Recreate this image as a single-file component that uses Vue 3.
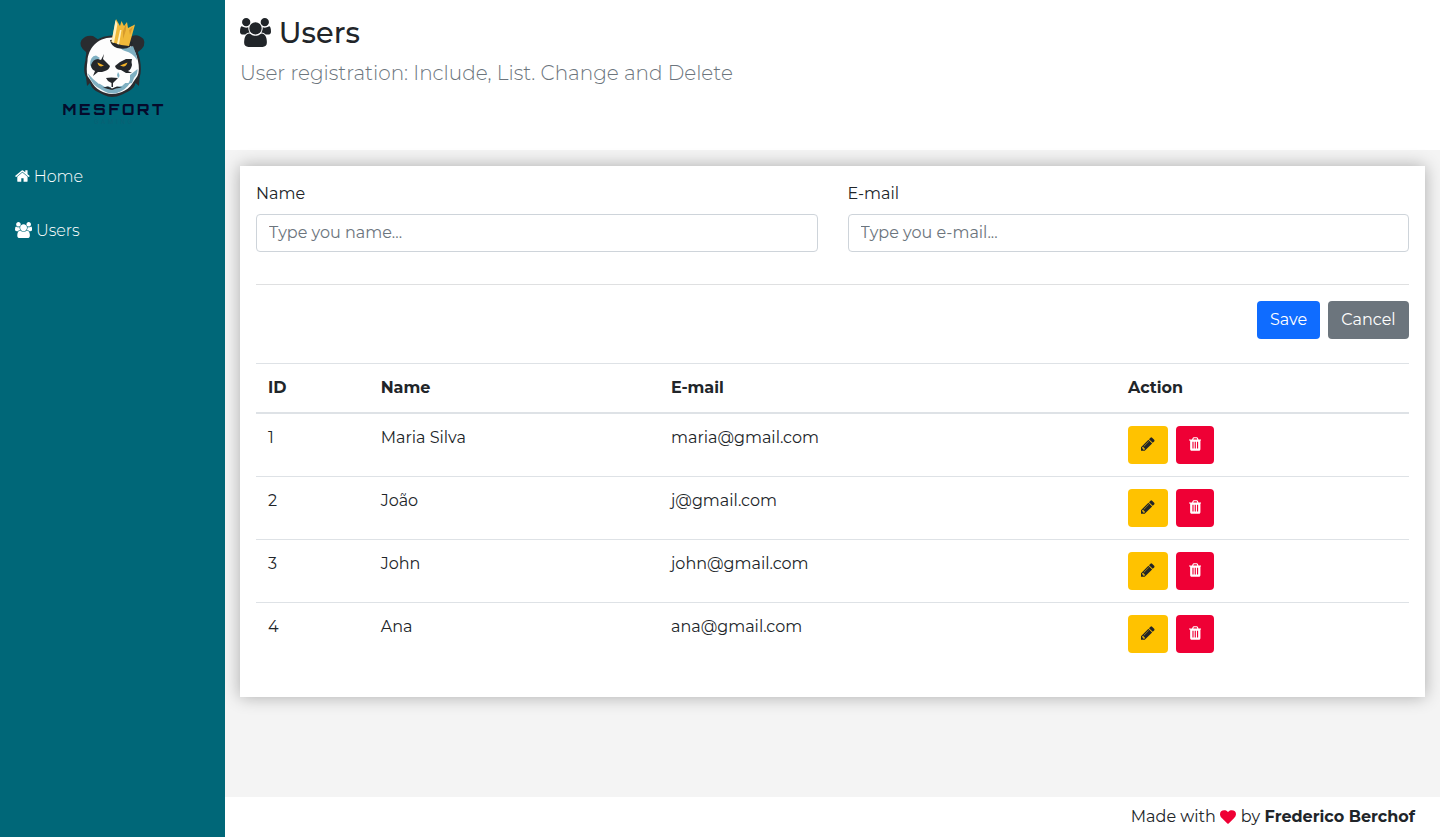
<script setup>
const users = [
  { id: 1, name: 'Maria Silva', email: 'maria@gmail.com' },
  { id: 2, name: 'João', email: 'j@gmail.com' },
  { id: 3, name: 'John', email: 'john@gmail.com' },
  { id: 4, name: 'Ana', email: 'ana@gmail.com' },
]

const groupPath =
  'M529 896q-162 5-265 128h-134q-82 0-138-40.5t-56-118.5q0-353 124-353 6 0 43.5 21t97.5 42.5 119 21.5q67 0 133-23-5 37-5 66 0 139 81 256zm1071 637q0 120-73 189.5t-194 69.5h-874q-121 0-194-69.5t-73-189.5q0-53 3.5-103.5t14-109 26.5-108.5 43-97.5 62-81 85.5-53.5 111.5-20q10 0 43 21.5t73 48 107 48 135 21.5 135-21.5 107-48 73-48 43-21.5q61 0 111.5 20t85.5 53.5 62 81 43 97.5 26.5 108.5 14 109 3.5 103.5zm-1024-1277q0 106-75 181t-181 75-181-75-75-181 75-181 181-75 181 75 75 181zm704 384q0 159-112.5 271.5t-271.5 112.5-271.5-112.5-112.5-271.5 112.5-271.5 271.5-112.5 271.5 112.5 112.5 271.5zm576 225q0 78-56 118.5t-138 40.5h-134q-103-123-265-128 81-117 81-256 0-29-5-66 66 23 133 23 59 0 119-21.5t97.5-42.5 43.5-21q124 0 124 353zm-128-609q0 106-75 181t-181 75-181-75-75-181 75-181 181-75 181 75 75 181z'
</script>

<template>
  <div class="app">
    <aside class="logo">
      <svg class="brand" width="125" height="120" viewBox="0 0 125 120">
        <g fill="#2a2c30">
          <path d="M36 42Q28 36 31.500 30Q36 24.500 43 26Q47 28 50 32L37 46Z" />
          <path d="M88 42Q97 36 93.500 29Q88 23.500 82 26L76 32L88 46Z" />
          <path d="M62 25.500C46 26 36 37 35.500 50C33.500 57 34 64 36 67L37 76L40 73C42 81 49 82 54 85Q58 87 62 87Q67 87 71 85C77 82 84 80 85.500 73L89 76L89.500 68C91.500 62 91 56 90 50C88 36 78 26 62 25.500Z" />
        </g>
        <path fill="#fdfdfd" d="M62 27.500C47 27.500 38 39 37.500 51Q36 60 37.500 66L41 71C45 79 54 84 62 84C71 84 80 79 84 71L87.500 66Q90 60 88 51C86 39 77 27.500 62 27.500Z" />
        <g fill="#7fb0c2">
          <path d="M40 55Q40 46 46 45.500L50 48L44 52L43 60Z" />
          <path d="M68 35Q77 40 83 36L86 44Q87 47 87 50Q83 43 75 41Q70 39 68 35Z" />
          <path d="M80 65L87.500 59Q88 64 84 68L82 73L78 74L80 70Z" />
          <path d="M37.500 63L43 69L49 74L53 72L56 76L61 77V80L66 77L71 76L75 73L80 73Q76 80 67 83Q60 85 52 80Q42 76 37.500 63Z" />
          <path d="M68 62Q71 66 68 68L67 65Z" />
        </g>
        <path fill="#fdfdfd" d="M47 69Q52 65 57 71L61 75L55 77L50 74ZM67 71L71 67L77 71L72 76L64 75Z" />
        <g fill="#24272b">
          <path d="M41 55Q43 49 48 49L51 50L54 44L53 49L57 53L60 56Q59 60 55 61L52 62L48 62L43 66L45 61Q41 59 41 55Z" />
          <path d="M65 56L70 52L76 49L82 49Q81 52 82 55Q81 60 78 61L82 63L76 63L71 60Q66 60 65 56Z" />
          <path d="M56 68Q61 67 68 68L65 71L63 73V77L61.500 77V73L58 71Z" />
          <path d="M53 77.500L58 76.500L62 78.500L67 76.500L72 77.500L66 78.500L62 80L58 79Z" />
        </g>
        <path fill="#f2b229" d="M47.500 52.500L54 55.500L51 56.500Q48 56 47.500 52.500ZM70 55.500L77.500 52.500Q76 57 73 56.500Z" />
        <path fill="#24272b" d="M60 30Q61 36 67 38Q75 40 80 37L83 33L78 28Z" />
        <path fill="#f0b93a" d="M61.500 32L66 9L70 16L71.500 11L74 16L77 12L78 18L85 14.500L79 36Q69 35 61.500 32Z" />
        <path fill="#fff0bd" d="M61.500 32L65.500 10L67.500 14L64 33ZM67 34L70 20L71.500 20L69 34.500Z" />
        <path fill="#c98a26" d="M73 21L76 14L76 20L73 29ZM79 20L83 16.500L80 25Z" opacity=".65" />
        <text x="12.500" y="105" textLength="101" class="wordmark">MESFORT</text>
        <text x="44" y="114" textLength="38" class="tagline">GAMING</text>
      </svg>
    </aside>

    <header class="header">
      <h1>
        <svg class="h-icon" viewBox="-64 0 1920 1792"><path :d="groupPath" /></svg>
        <span>Users</span>
      </h1>
      <p>User registration: Include, List. Change and Delete</p>
    </header>

    <nav class="menu">
      <a>
        <svg class="home-icon" viewBox="64 0 1664 1792"><path d="M1472 992v480q0 26-19 45t-45 19h-384v-384h-256v384h-384q-26 0-45-19t-19-45v-480q0-1 .5-3t.5-3l575-474 575 474q1 2 1 6zm223-69l-62 74q-8 9-21 11h-3q-13 0-21-7l-692-577-692 577q-12 8-24 7-13-2-21-11l-62-74q-8-10-7-23.500t11-21.500l719-599q32-26 76-26t76 26l244 204v-195q0-14 9-23t23-9h192q14 0 23 9t9 23v408l219 182q10 8 11 21.500t-7 23.500z" /></svg>
        <span>Home</span>
      </a>
      <a>
        <svg class="users-icon" viewBox="-64 0 1920 1792"><path :d="groupPath" /></svg>
        <span>Users</span>
      </a>
    </nav>

    <main class="content">
      <section class="card">
        <div class="form">
          <label>
            <span>Name</span>
            <input type="text" placeholder="Type you name..." />
          </label>
          <label>
            <span>E-mail</span>
            <input type="text" placeholder="Type you e-mail..." />
          </label>
        </div>
        <hr />
        <div class="actions">
          <button class="btn save">Save</button>
          <button class="btn cancel">Cancel</button>
        </div>
        <table>
          <thead>
            <tr>
              <th class="c-id">ID</th>
              <th class="c-name">Name</th>
              <th class="c-mail">E-mail</th>
              <th>Action</th>
            </tr>
          </thead>
          <tbody>
            <tr v-for="u in users" :key="u.id">
              <td>{{ u.id }}</td>
              <td>{{ u.name }}</td>
              <td>{{ u.email }}</td>
              <td>
                <div class="row-actions">
                  <button class="btn edit" aria-label="Edit">
                    <svg width="13.714" height="16" viewBox="128 0 1536 1792"><path d="M491 1536l91-91-235-235-91 91v107h128v128h107zm523-928q0-22-22-22-10 0-17 7l-542 542q-7 7-7 17 0 22 22 22 10 0 17-7l542-542q7-7 7-17zm-54-192l416 416-832 832h-416v-416zm683 96q0 53-37 90l-166 166-416-416 166-165q36-38 90-38 53 0 91 38l235 234q37 39 37 91z" /></svg>
                  </button>
                  <button class="btn remove" aria-label="Delete">
                    <svg width="12.571" height="16" viewBox="192 0 1408 1792"><path d="M704 1376v-704q0-14-9-23t-23-9h-64q-14 0-23 9t-9 23v704q0 14 9 23t23 9h64q14 0 23-9t9-23zm256 0v-704q0-14-9-23t-23-9h-64q-14 0-23 9t-9 23v704q0 14 9 23t23 9h64q14 0 23-9t9-23zm256 0v-704q0-14-9-23t-23-9h-64q-14 0-23 9t-9 23v704q0 14 9 23t23 9h64q14 0 23-9t9-23zm-544-992h448l-48-117q-7-9-17-11h-317q-10 2-17 11zm928 32v64q0 14-9 23t-23 9h-96v948q0 83-47 143.500t-113 60.500h-832q-66 0-113-58.500t-47-141.500v-952h-96q-14 0-23-9t-9-23v-64q0-14 9-23t23-9h309l70-167q15-37 54-63t79-26h320q40 0 79 26t54 63l70 167h309q14 0 23 9t9 23z" /></svg>
                  </button>
                </div>
              </td>
            </tr>
          </tbody>
        </table>
      </section>
    </main>

    <footer class="footer">
      <span>Made with</span>
      <svg width="16" height="16" viewBox="0 0 1792 1792"><path d="M896 1664q-26 0-44-18l-624-602q-10-8-27.500-26t-55.500-65.500-68-97.500-53.500-121-23.500-138q0-220 127-344t351-124q62 0 126.500 21.500t120 58 95.500 68.500 76 68q36-36 76-68t95.500-68.500 120-58 126.500-21.500q224 0 351 124t127 344q0 221-229 450l-623 600q-18 18-44 18z" /></svg>
      <span>by</span>
      <strong>Frederico Berchof</strong>
    </footer>
  </div>
</template>

<style>
body { margin: 0; }
</style>

<style scoped>
* { box-sizing: border-box; }
.app {
  display: grid;
  grid-template: 150px 1fr 40px / 225px 1fr;
  grid-template-areas: 'logo header' 'menu content' 'menu footer';
  height: 100vh;
  background: #f4f4f4;
  color: #212529;
  font: 400 16px/24px Montserrat, Inter, sans-serif;
}
span, p, strong { white-space: nowrap; }
svg { flex: none; fill: currentColor; }
.logo { grid-area: logo; background: #006778; padding: 10px 50px; }
.brand { display: block; }
.wordmark { font: 800 15px Orbitron, 'DejaVu Sans', sans-serif; fill: #050b2c; }
.tagline { font: 400 6px Inter, sans-serif; fill: #0b5f73; }
.header { grid-area: header; background: #fff; padding: 15px 15px 0; }
h1 { display: flex; gap: 7.8px; margin: 0; font-size: 28.8px; font-weight: 500; line-height: 36px; height: 46px; }
.h-icon { width: 31px; height: 29px; margin-top: 3px; }
.header p { margin: 0; font-size: 20px; font-weight: 300; line-height: 24px; color: #6c757d; }
.menu { grid-area: menu; background: #006778; color: #fff; font-weight: 300; }
.menu a { display: flex; align-items: center; height: 54px; padding: 0 15px; gap: 3.8px; }
.menu svg { margin-bottom: 2px; }
.home-icon { width: 14.857px; height: 16px; }
.users-icon { width: 17.143px; height: 16px; }
.content { grid-area: content; padding: 16px 15px; }
.card { height: 531px; padding: 16px; background: #fff; box-shadow: 0 0 16px rgba(0, 0, 0, .3); }
.form { display: grid; grid-template-columns: 1fr 1fr; gap: 30px; height: 86px; }
label > span { display: block; height: 32px; }
input { display: block; width: 100%; height: 38px; padding: 5px 12px 7px; border: 1px solid #ced4da; border-radius: 4px; background: #fff; font: inherit; }
input::placeholder { color: #6c757d; opacity: 1; }
hr { margin: 16px 0; border: 0; border-top: 1px solid #dfe0e1; }
.actions { display: flex; justify-content: flex-end; gap: 8px; margin-bottom: 24px; }
.btn { display: flex; align-items: center; justify-content: center; height: 38px; padding: 0; border: 0; border-radius: 4px; font: inherit; color: #fff; }
.btn svg { margin-bottom: 2px; }
.save { width: 63px; background: #0f6cff; }
.cancel { width: 81px; background: #6c757d; }
table { width: 100%; table-layout: fixed; border-collapse: collapse; }
th { height: 49px; padding: 12px; text-align: left; font-weight: 700; border-top: 1px solid #dee2e6; border-bottom: 2px solid #dee2e6; }
td { height: 63px; padding: 12px; vertical-align: top; border-top: 1px solid #dee2e6; }
.c-id { width: 112.700px; }
.c-name { width: 290.300px; }
.c-mail { width: 457px; }
.row-actions { display: flex; gap: 8px; }
.edit { width: 40px; background: #ffc200; color: #212529; }
.remove { width: 38px; background: #ef0035; }
.footer { grid-area: footer; display: flex; align-items: center; justify-content: flex-end; gap: 4.5px; padding-right: 25px; background: #fff; }
.footer svg { color: #ef0035; margin-bottom: 1px; }
.footer strong { font-weight: 700; }
</style>
